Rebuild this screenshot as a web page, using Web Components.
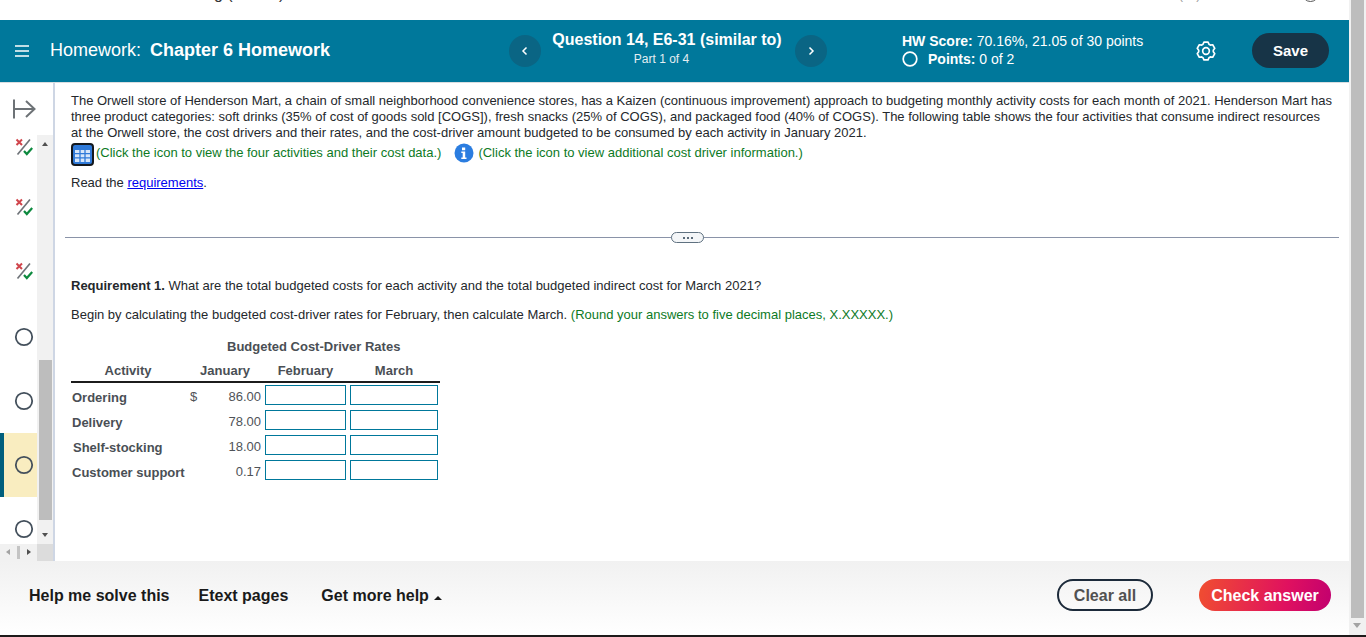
<!DOCTYPE html>
<html lang="en"><head><meta charset="utf-8"><title>Homework</title>
<style>
html,body{margin:0;padding:0;height:637px;overflow:hidden;background:#fff;font-family:"Liberation Sans",Arial,sans-serif}
</style></head><body>
<hw-app></hw-app>
<script>
const def=(name,html)=>{customElements.define(name,class extends HTMLElement{
  connectedCallback(){ if(this.shadowRoot) return; this.attachShadow({mode:'open'}).innerHTML=typeof html==='function'?html(this):html; }
});};

const cog=(()=>{let d='';for(let i=0;i<6;i++){const a=-90+i*60;
  const p=(deg,r)=>(12+r*Math.cos(deg*Math.PI/180)).toFixed(2)+' '+(12+r*Math.sin(deg*Math.PI/180)).toFixed(2);
  d+=(i?'L':'M')+p(a-24,8.8)+'L'+p(a-13,11)+'L'+p(a+13,11)+'L'+p(a+24,8.8);}
  return d+'Z';})();

def('hw-status',h=>{
  const t=h.getAttribute('type');
  const svg=t==='mixed'
  ?`<svg width="18" height="18" viewBox="0 0 18 18"><path d="M1.500 1.500l5.500 5.500M7 1.500l-5.500 5.500" stroke="#d0454c" stroke-width="2" fill="none"/><path d="M2.500 16.500L15 1.500" stroke="#6f7479" stroke-width="1.700" fill="none"/><path d="M9 13l2.800 3L17.200 10" stroke="#0d8a3f" stroke-width="2.200" fill="none"/></svg>`
  :`<svg width="20" height="20" viewBox="0 0 20 20"><circle cx="10" cy="10" r="8.200" fill="none" stroke="#44505c" stroke-width="1.800"/></svg>`;
  return `<style>:host{display:flex;align-items:center;justify-content:center;height:64px;width:38px;box-sizing:border-box;padding-left:10px}
  :host([active]){background:#f9edc0;box-shadow:inset 4px 0 0 #005f7d}
  svg{display:block;flex:none}</style>${svg}`;
});

def('hw-rail',`<style>
:host{display:block;width:55px;flex:none;box-sizing:border-box;border-right:2px solid #ced6e4;position:relative;height:478px;overflow:hidden;background:#fff}
.exp{height:39px;display:flex;align-items:flex-start;padding:16px 0 0 12px;box-sizing:border-box;width:38px}
.list{display:flex;flex-direction:column;width:38px}
.sb{position:absolute;left:37px;top:52px;width:16px;height:409px;background:#f1f1f1}
.thumb{position:absolute;left:2px;top:225px;width:13px;height:160px;background:#bdbdbd}
.up,.dn{position:absolute;left:5px;width:0;height:0;border-left:3.500px solid transparent;border-right:3.500px solid transparent}
.up{top:7px;border-bottom:4px solid #505050}.dn{bottom:7px;border-top:4px solid #505050}
.hb{position:absolute;left:0;top:461px;width:37px;height:17px;background:#f1f1f1}
.corner{position:absolute;left:37px;top:461px;width:16px;height:17px;background:#dcdcdc}
.hb i{position:absolute;top:5px;width:0;height:0;border-top:3.500px solid transparent;border-bottom:3.500px solid transparent}
.l{left:6px;border-right:4px solid #a3a3a3}.r{left:27px;border-left:4px solid #505050}
.ht{position:absolute;left:17px;top:2px;width:3px;height:13px;background:#c4c4c4}
</style>
<div class="exp"><svg width="24" height="20" viewBox="0 0 24 20"><path d="M2 0.500v19M2 10h20M14 2l8.500 8-8.500 8" fill="none" stroke="#6d7276" stroke-width="2"/></svg></div>
<div class="list"><slot></slot></div>
<div class="sb"><div class="up"></div><div class="thumb"></div><div class="dn"></div></div>
<div class="hb"><i class="l"></i><span class="ht"></span><i class="r"></i></div><div class="corner"></div>`);

def('hw-header',`<style>
:host{display:flex;align-items:center;height:63px;background:#00789b;color:#fff;box-sizing:border-box;position:relative;border-bottom:1px solid #d9dde0}
.menu{width:14px;height:12px;margin-left:15px;flex:none;display:block}
.title{font-size:18px;margin-left:21px;white-space:nowrap;width:459px;flex:none;padding-bottom:2px}
.title b{margin-left:4px}
.nav{width:32px;height:32px;border-radius:50%;background:#0a6584;flex:none;display:flex;align-items:center;justify-content:center}
.q{width:254px;flex:none;text-align:center;margin-top:-4px}
.q b{display:block;font-size:16px;line-height:20px;white-space:nowrap;padding-right:2px}
.q span{display:block;font-size:12px;line-height:18px;color:#e4eef2;padding-right:13px}
.score{margin-left:75px;width:295px;flex:none;font-size:14px;line-height:18px;margin-top:-2px}
.score div{display:flex;align-items:center;white-space:nowrap}
.score svg{margin-right:10px;display:block}
.gear{flex:none;display:block;margin-left:-1px;margin-right:-1px}
.save{margin-left:37px;width:77px;height:35px;border-radius:18px;background:#173447;font-weight:700;font-size:15px;display:flex;align-items:center;justify-content:center;flex:none;margin-top:-1px}
</style>
<svg class="menu" viewBox="0 0 14 12"><path d="M0 1h14.500M0 6h14.500M0 11h14.500" stroke="#fff" stroke-width="1.300"/></svg>
<div class="title">Homework: <b>Chapter 6 Homework</b></div>
<div class="nav"><svg width="8" height="10" viewBox="0 0 8 10"><path d="M5.500 1.500L2 5l3.500 3.500" fill="none" stroke="#fff" stroke-width="1.500"/></svg></div>
<div class="q"><b>Question 14, E6-31 (similar to)</b><span>Part 1 of 4</span></div>
<div class="nav"><svg width="8" height="10" viewBox="0 0 8 10"><path d="M2.500 1.500L6 5 2.500 8.500" fill="none" stroke="#fff" stroke-width="1.500"/></svg></div>
<div class="score"><div><b>HW Score:</b>&nbsp;70.16%, 21.05 of 30 points</div><div><svg width="16" height="16" viewBox="0 0 16 16"><circle cx="8" cy="8" r="6.800" fill="none" stroke="#fff" stroke-width="1.700"/></svg><b>Points:</b>&nbsp;0 of 2</div></div>
<svg class="gear" width="20" height="20" viewBox="0 0 24 24" fill="none" stroke="#fff" stroke-width="2" stroke-linejoin="round"><path d="${cog}"/><circle cx="12" cy="12" r="4"/></svg>
<div class="save">Save</div>`);

def('hw-input',`<style>:host{display:block;width:81px;height:20px;box-sizing:border-box;border:1px solid #00789b;background:#fff}:host([wide]){width:88px}</style>`);

def('hw-rates',`<style>
:host{display:block;color:#4a4f55;font-size:13px;margin-top:16px;width:369px}
.cap{font-weight:700;padding-left:156px;line-height:16px;height:16px;white-space:nowrap}
.grid{display:grid;grid-template-columns:114px 80px 81px 94px;margin-top:8px}
.h{font-weight:700;text-align:center;line-height:16px;padding-bottom:2px;border-bottom:2px solid #1c1c1c;margin-bottom:2px}
.n{display:flex;justify-content:space-between;align-items:center;padding:0 4px 1px 5px;color:#4f5358;height:25px;box-sizing:border-box}
.rowlabel{font-weight:700;height:25px;display:flex;align-items:center;padding-left:1px;box-sizing:border-box;white-space:nowrap}
.c{height:25px;box-sizing:border-box}
.c2{padding-left:4px}
</style>
<div class="cap">Budgeted Cost-Driver Rates</div>
<div class="grid">
<div class="h">Activity</div><div class="h">January</div><div class="h">February</div><div class="h" style="padding-left:2px">March</div>
<div class="rowlabel">Ordering</div><div class="n"><span>$</span><span>86.00</span></div><div class="c"><hw-input></hw-input></div><div class="c c2"><hw-input wide></hw-input></div>
<div class="rowlabel">Delivery</div><div class="n"><span></span><span>78.00</span></div><div class="c"><hw-input></hw-input></div><div class="c c2"><hw-input wide></hw-input></div>
<div class="rowlabel" style="padding-left:2px">Shelf-stocking</div><div class="n"><span></span><span>18.00</span></div><div class="c"><hw-input></hw-input></div><div class="c c2"><hw-input wide></hw-input></div>
<div class="rowlabel">Customer support</div><div class="n"><span></span><span>0.17</span></div><div class="c"><hw-input></hw-input></div><div class="c c2"><hw-input wide></hw-input></div>
</div>`);

def('hw-question',`<style>
:host{display:block;flex:1;min-width:0;box-sizing:border-box;padding:10px 10px 0 16px;font-size:13px;line-height:16px;color:#24282c;height:478px;overflow:hidden}
p{margin:0}
.intro{white-space:nowrap}
.g{color:#0d7a1f}
.icons{display:flex;align-items:center;margin-top:2px;height:23px;white-space:nowrap}
.icons .g{margin:0 0 4px 2px}
.tbl{flex:none;display:block}
.info{flex:none;display:block;margin:0 2px 3px 13px}
.read{margin-top:9px}
a{color:#0000ee;text-decoration:underline}
.sep{height:1px;background:#8a93a8;margin:46px 0 0 -6px;position:relative}
.pill{position:absolute;left:606px;top:-5px;width:31px;height:9px;border:1px solid #5f7180;border-radius:6px;background:#f4f6f8;display:flex;align-items:center;justify-content:center;gap:2px}
.pill i{width:2px;height:2px;background:#5b6b79;display:block}
.req{margin-top:40px}
.begin{margin-top:13px}
</style>
<p class="intro">The Orwell store of Henderson Mart, a chain of small neighborhood convenience stores, has a Kaizen (continuous improvement) approach to budgeting monthly activity costs for each month of 2021. Henderson Mart has<br>three product categories: soft drinks (35% of cost of goods sold [COGS]), fresh snacks (25% of COGS), and packaged food (40% of COGS). The following table shows the four activities that consume indirect resources<br>at the Orwell store, the cost drivers and their rates, and the cost-driver amount budgeted to be consumed by each activity in January 2021.</p>
<div class="icons">
<svg class="tbl" width="23" height="23" viewBox="0 0 23 23"><rect x="1" y="1" width="21" height="21" rx="3" fill="#2f7ad9" stroke="#14181d" stroke-width="2"/><path d="M4 7h15v12H4z" fill="#d6e6fa"/><path d="M9 6.500v13M14 6.500v13M3.500 10.700h16M3.500 14.800h16" stroke="#2f7ad9" stroke-width="1.300"/></svg>
<span class="g">(Click the icon to view the four activities and their cost data.)</span>
<svg class="info" width="20" height="20" viewBox="0 0 20 20"><circle cx="10" cy="10" r="9.500" fill="#2b7de0"/><path d="M8 4.500h3.200v2.700H8zM7.300 8.600h3.900v6h1.300V16H7.300v-1.400h1.400v-4.600H7.300z" fill="#fff"/></svg>
<span class="g">(Click the icon to view additional cost driver information.)</span>
</div>
<p class="read">Read the <a href="#">requirements</a>.</p>
<div class="sep"><div class="pill"><i></i><i></i><i></i></div></div>
<p class="req"><b>Requirement 1.</b> What are the total budgeted costs for each activity and the total budgeted indirect cost for March 2021?</p>
<p class="begin">Begin by calculating the budgeted cost-driver rates for February, then calculate March. <span class="g">(Round your answers to five decimal places, X.XXXXX.)</span></p>
<hw-rates></hw-rates>`);

def('hw-footer',`<style>
:host{display:flex;align-items:center;height:74px;background:linear-gradient(#f1f1f1,#ffffff);box-sizing:border-box;font-size:16px;font-weight:700;color:#1a1a1a;padding:0 0 6px 29px;white-space:nowrap}
.l{display:block;padding-top:2px}
.e{margin-left:29px}
span.m{margin-left:33px;display:flex;align-items:center}
.m i{display:block;width:0;height:0;border-left:4px solid transparent;border-right:4px solid transparent;border-bottom:4px solid #1a1a1a;margin:3px 0 0 5px}
.sp{flex:1}
.clear{width:96px;height:32px;box-sizing:border-box;border:2px solid #1c2a3a;border-radius:16px;color:#515151;display:flex;align-items:center;justify-content:center;padding-top:1px}
.check{margin-left:46px;margin-right:18px;width:132px;height:32px;box-sizing:border-box;padding-top:1px;border-radius:16px;background:linear-gradient(100deg,#f04e30 0%,#e0115f 65%,#c2006f 100%);color:#fff;display:flex;align-items:center;justify-content:center}
</style>
<span class="l">Help me solve this</span><span class="l e">Etext pages</span><span class="l m">Get more help<i></i></span><span class="sp"></span>
<div class="clear">Clear all</div><div class="check">Check answer</div>`);

def('hw-scroll',`<style>
:host{display:block;width:17px;flex:none;background:#f1f1f1;position:relative}
.t{position:absolute;left:2px;top:0;width:13px;height:618px;background:#bdbdbd}
.d{position:absolute;left:4px;top:623px;width:0;height:0;border-left:4px solid transparent;border-right:4px solid transparent;border-top:5px solid #a3a3a3}
</style><div class="t"></div><div class="d"></div>`);

def('hw-clipped',`<style>
:host{display:block;height:20px;position:relative;overflow:hidden;background:#fff}
.a{position:absolute;left:214px;top:-15px;font-size:16px;color:#333;white-space:nowrap;line-height:18px}
.b{position:absolute;left:1179px;top:-12px;font-size:12px;color:#999;white-space:nowrap;line-height:14px}
.c{position:absolute;left:1302px;top:-15px;width:15px;height:15px;border:1.500px solid #555;border-radius:50%}
</style><span class="a">g (similar)</span><span class="b">(14)</span><span class="c"></span>`);

def('hw-app',`<style>
:host{display:flex;width:1366px;height:637px;overflow:hidden;background:#fff;position:relative}
.main{flex:1;min-width:0;display:flex;flex-direction:column;height:635px}
.mid{display:flex;height:478px}
.line{position:absolute;left:0;right:0;top:635px;height:2px;background:#1e1a1a}
hw-status[type=mixed]{padding-bottom:4px}
</style>
<div class="main">
<hw-clipped></hw-clipped>
<hw-header></hw-header>
<div class="mid"><hw-rail>
<hw-status type="mixed" style="height:55px;padding-bottom:5px"></hw-status>
<hw-status type="mixed"></hw-status>
<hw-status type="mixed"></hw-status>
<hw-status style="padding-bottom:1px"></hw-status>
<hw-status style="padding-bottom:1px"></hw-status>
<hw-status active></hw-status>
<hw-status style="padding-bottom:1px"></hw-status>
</hw-rail><hw-question></hw-question></div>
<hw-footer></hw-footer>
</div>
<hw-scroll></hw-scroll>
<div class="line"></div>`);
</script>
</body></html>
